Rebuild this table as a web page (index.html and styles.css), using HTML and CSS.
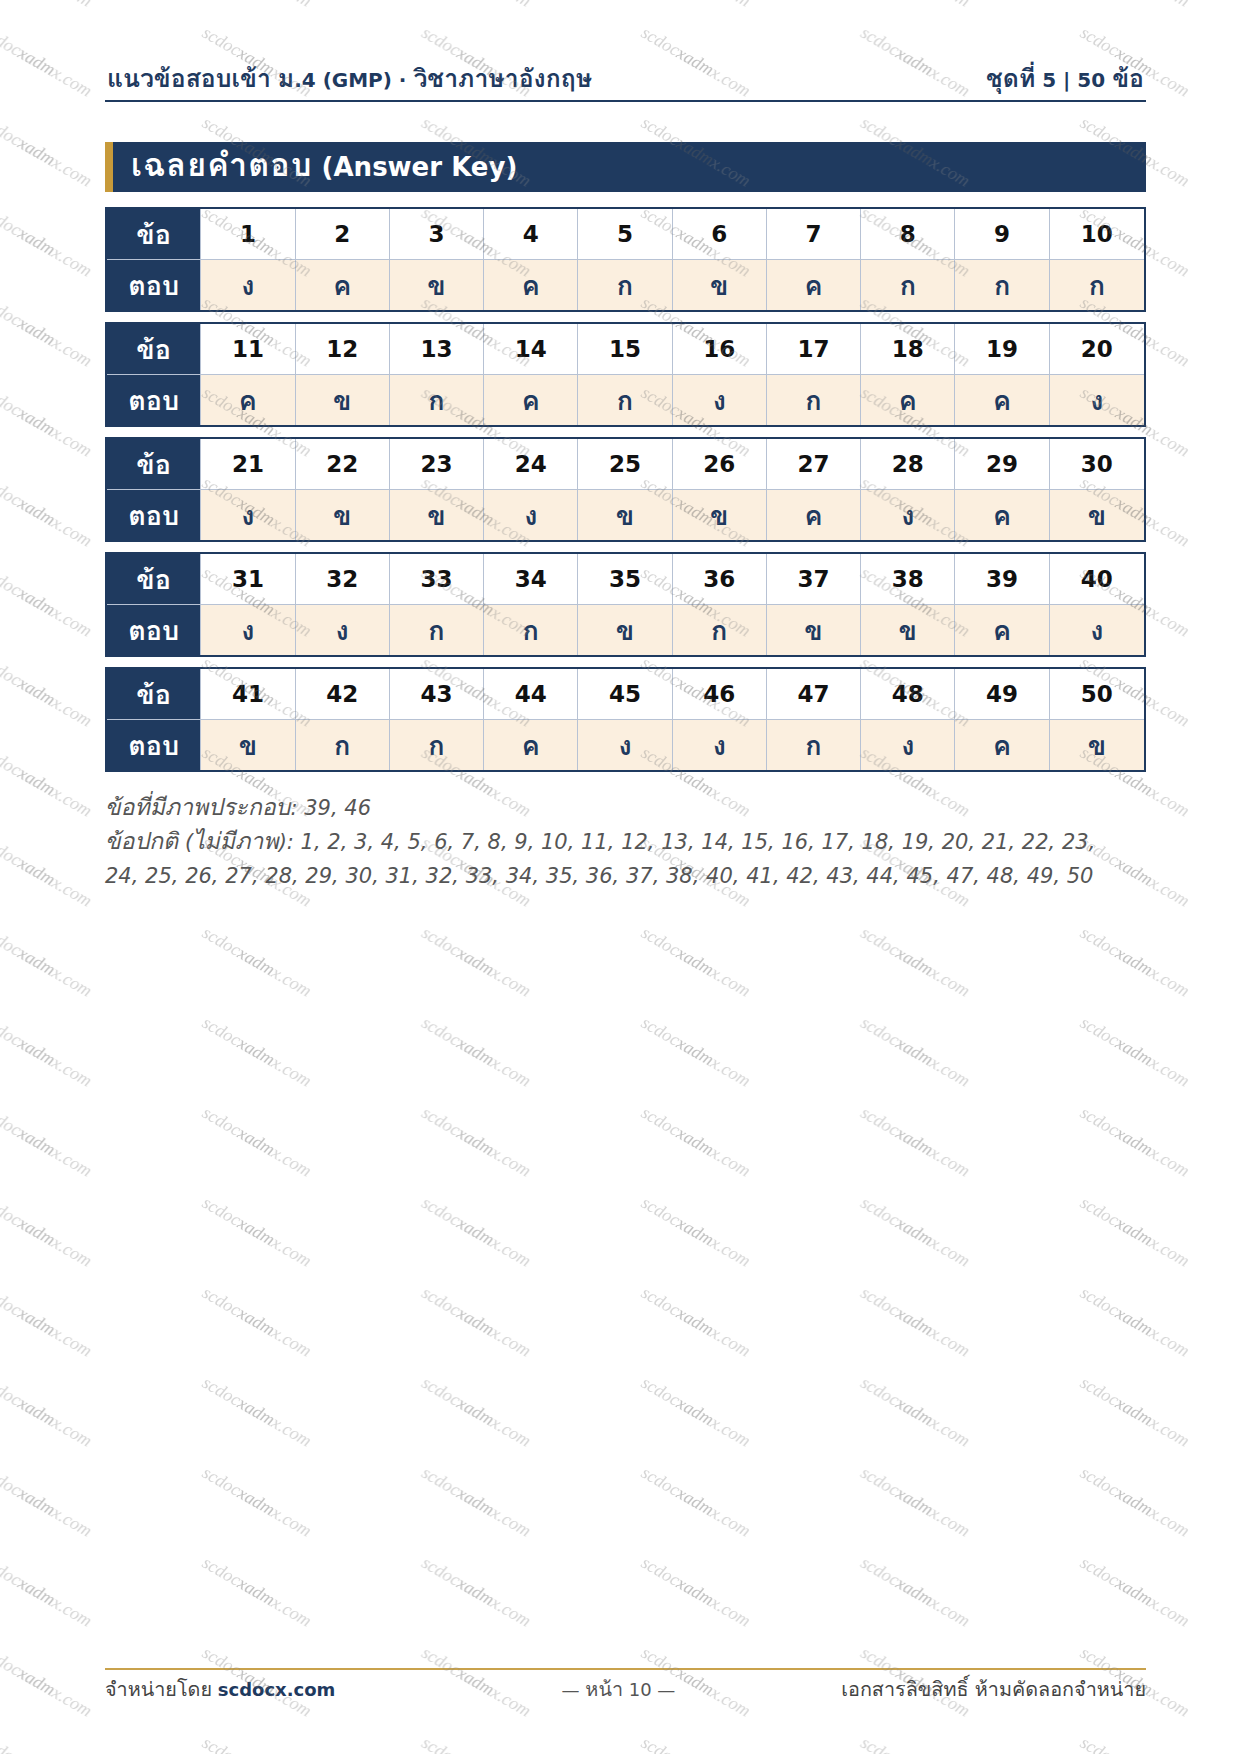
FILE: index.html
```html
<!DOCTYPE html>
<html lang="th">
<head>
<meta charset="utf-8">
<title>เฉลยคำตอบ</title>
<link rel="stylesheet" href="styles.css">
</head>
<body>
<div class="page">
  <header class="top">
    <div class="top-left"><span class="th">แนวข้อสอบเข้า</span> <span class="th">ม</span>.4 (GMP) · <span class="th">วิชาภาษาอังกฤษ</span></div>
    <div class="top-right"><span class="th">ชุดที่</span> 5 | 50 <span class="th">ข้อ</span></div>
  </header>

  <h1 class="section-title"><span class="th">เฉลยคำตอบ</span> (Answer Key)</h1>

  <div class="keys">
    <div class="key">
      <div class="lab">ข้อ</div><div class="num">1</div><div class="num">2</div><div class="num">3</div><div class="num">4</div><div class="num">5</div><div class="num">6</div><div class="num">7</div><div class="num">8</div><div class="num">9</div><div class="num">10</div>
      <div class="lab">ตอบ</div><div class="ans">ง</div><div class="ans">ค</div><div class="ans">ข</div><div class="ans">ค</div><div class="ans">ก</div><div class="ans">ข</div><div class="ans">ค</div><div class="ans">ก</div><div class="ans">ก</div><div class="ans">ก</div>
    </div>
    <div class="key">
      <div class="lab">ข้อ</div><div class="num">11</div><div class="num">12</div><div class="num">13</div><div class="num">14</div><div class="num">15</div><div class="num">16</div><div class="num">17</div><div class="num">18</div><div class="num">19</div><div class="num">20</div>
      <div class="lab">ตอบ</div><div class="ans">ค</div><div class="ans">ข</div><div class="ans">ก</div><div class="ans">ค</div><div class="ans">ก</div><div class="ans">ง</div><div class="ans">ก</div><div class="ans">ค</div><div class="ans">ค</div><div class="ans">ง</div>
    </div>
    <div class="key">
      <div class="lab">ข้อ</div><div class="num">21</div><div class="num">22</div><div class="num">23</div><div class="num">24</div><div class="num">25</div><div class="num">26</div><div class="num">27</div><div class="num">28</div><div class="num">29</div><div class="num">30</div>
      <div class="lab">ตอบ</div><div class="ans">ง</div><div class="ans">ข</div><div class="ans">ข</div><div class="ans">ง</div><div class="ans">ข</div><div class="ans">ข</div><div class="ans">ค</div><div class="ans">ง</div><div class="ans">ค</div><div class="ans">ข</div>
    </div>
    <div class="key">
      <div class="lab">ข้อ</div><div class="num">31</div><div class="num">32</div><div class="num">33</div><div class="num">34</div><div class="num">35</div><div class="num">36</div><div class="num">37</div><div class="num">38</div><div class="num">39</div><div class="num">40</div>
      <div class="lab">ตอบ</div><div class="ans">ง</div><div class="ans">ง</div><div class="ans">ก</div><div class="ans">ก</div><div class="ans">ข</div><div class="ans">ก</div><div class="ans">ข</div><div class="ans">ข</div><div class="ans">ค</div><div class="ans">ง</div>
    </div>
    <div class="key">
      <div class="lab">ข้อ</div><div class="num">41</div><div class="num">42</div><div class="num">43</div><div class="num">44</div><div class="num">45</div><div class="num">46</div><div class="num">47</div><div class="num">48</div><div class="num">49</div><div class="num">50</div>
      <div class="lab">ตอบ</div><div class="ans">ข</div><div class="ans">ก</div><div class="ans">ก</div><div class="ans">ค</div><div class="ans">ง</div><div class="ans">ง</div><div class="ans">ก</div><div class="ans">ง</div><div class="ans">ค</div><div class="ans">ข</div>
    </div>
  </div>

  <div class="notes">
    <p><span class="th">ข้อที่มีภาพประกอบ</span>: 39, 46</p>
    <p><span class="th">ข้อปกติ</span> (<span class="th">ไม่มีภาพ</span>): 1, 2, 3, 4, 5, 6, 7, 8, 9, 10, 11, 12, 13, 14, 15, 16, 17, 18, 19, 20, 21, 22, 23,<br>24, 25, 26, 27, 28, 29, 30, 31, 32, 33, 34, 35, 36, 37, 38, 40, 41, 42, 43, 44, 45, 47, 48, 49, 50</p>
  </div>

  <footer class="foot">
    <div class="foot-left"><span class="th">จำหน่ายโดย</span> <b class="brand">scdocx.com</b></div>
    <div class="foot-mid">— <span class="th">หน้า</span> 10 —</div>
    <div class="foot-right"><span class="th">เอกสารลิขสิทธิ์ ห้ามคัดลอกจำหน่าย</span></div>
  </footer>

  <svg class="wm" width="1240" height="1754" aria-hidden="true">
    <defs>
      <pattern id="wmp" x="-28.5" y="10" width="219.5" height="90" patternUnits="userSpaceOnUse">
        <text class="wm-t" transform="translate(10,26) rotate(30)"><tspan class="wm-a">scdoc</tspan><tspan class="wm-b">xadm</tspan><tspan class="wm-a">x.com</tspan></text>
      </pattern>
    </defs>
    <rect width="1240" height="1754" fill="url(#wmp)"></rect>
  </svg>
</div>
</body>
</html>
```

FILE: styles.css
```css
html, body {
  margin: 0;
  padding: 0;
  background: #ffffff;
}

.page {
  position: relative;
  width: 1240px;
  height: 1754px;
  box-sizing: border-box;
  padding: 0 94px 52px 105px;
  display: flex;
  flex-direction: column;
  overflow: hidden;
  font-family: "DejaVu Sans", "Loma", "Noto Sans Thai", sans-serif;
  color: #222;
}

/* Thai runs are set larger than the Latin text around them */
.th {
  font-size: 1.24em;
  line-height: 0;
}

.top {
  margin-top: 66px;
  display: flex;
  justify-content: space-between;
  align-items: baseline;
  height: 28px;
  padding: 0 2px 6px 2px;
  border-bottom: 2px solid #1f3a5f;
  font-size: 20px;
  line-height: 28px;
  font-weight: bold;
  color: #1f3a5f;
}

.section-title {
  margin: 40px 0 0 0;
  height: 50px;
  line-height: 50px;
  box-sizing: border-box;
  background: #1f3a5f;
  border-left: 8px solid #c79a3a;
  padding-left: 18px;
  color: #ffffff;
  font-size: 26px;
  font-weight: bold;
}

.section-title .th {
  letter-spacing: 1.2px;
}

.keys {
  margin-top: 15px;
  display: flex;
  flex-direction: column;
  gap: 10px;
}

.key {
  display: grid;
  grid-template-columns: repeat(11, 1fr);
  border: 2px solid #1f3a5f;
}

.key > div {
  height: 50px;
  display: flex;
  align-items: center;
  justify-content: center;
  border-right: 1px solid #b7c2d4;
  border-bottom: 1px solid #b7c2d4;
  font-size: 23px;
  font-weight: bold;
}

.key > div:nth-child(11n) {
  border-right: none;
}

.key > div:nth-child(n+12) {
  border-bottom: none;
}

.key .lab {
  background: #1f3a5f;
  color: #ffffff;
  font-size: 27px;
}

.key .num {
  background: #ffffff;
  color: #111111;
}

.key .ans {
  background: #fbefdf;
  color: #1f3a5f;
  font-size: 27px;
}

.notes {
  margin-top: 19px;
  font-size: 21px;
  line-height: 34px;
  font-style: italic;
  color: #555555;
}

.notes .th {
  font-size: 1.1em;
}

.notes p {
  margin: 0;
}

.foot {
  margin-top: auto;
  border-top: 2px solid #c9a24c;
  padding-top: 8px;
  display: grid;
  grid-template-columns: 1fr auto 1fr;
  font-size: 18px;
  line-height: 24px;
  color: #444444;
}

.foot .th {
  font-size: 1.1em;
}

.foot-mid {
  color: #555555;
  padding-right: 14px;
}

.foot-right {
  text-align: right;
}

.brand {
  color: #1f3a5f;
}

.wm {
  position: absolute;
  left: 0;
  top: 0;
  pointer-events: none;
}

.wm-t {
  font-family: "Liberation Serif", serif;
  font-style: italic;
  font-size: 18px;
}

.wm-a {
  fill: rgba(128, 128, 128, 0.34);
}

.wm-b {
  fill: rgba(90, 90, 90, 0.4);
}
```
